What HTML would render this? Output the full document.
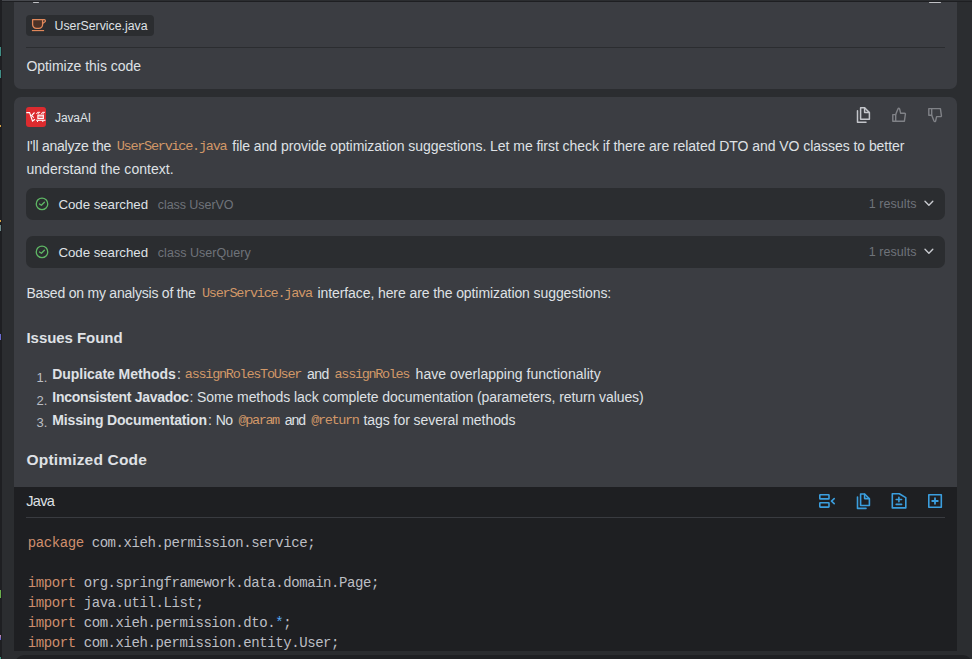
<!DOCTYPE html>
<html><head><meta charset="utf-8"><style>
html,body{margin:0;padding:0}
body{width:972px;height:659px;overflow:hidden;position:relative;background:#2b2d30;font-family:"Liberation Sans", sans-serif}
.b{position:absolute}
.t{position:absolute;white-space:nowrap}
.code{font-family:"Liberation Mono", monospace;font-size:14px;letter-spacing:-0.420px}
</style></head><body>
<div class="b" style="left:0;top:0;width:2px;height:659px;background:#1e1f22"></div>
<div class="b" style="left:2px;top:0;width:98px;height:1px;background:#46484d"></div>
<div class="b" style="left:0;top:1px;width:972px;height:1px;background:#1e1f22"></div>
<!-- card 1 -->
<div class="b" style="left:14px;top:2px;width:943px;height:87px;background:#3b3d42;border-radius:0 0 7px 7px"></div>
<div class="b" style="left:33px;top:2px;width:6px;height:1px;background:#c0c1c5;border-radius:1px"></div>
<div class="b" style="left:929px;top:2px;width:12px;height:1px;background:#c0c1c5;border-radius:1px"></div>
<div class="b" style="left:26px;top:15px;width:128px;height:21px;background:#2b2d30;border-radius:4px"></div>
<div class="b" style="left:26px;top:47px;width:919px;height:1px;background:#2b2d30"></div>
<!-- card 2 -->
<div class="b" style="left:14px;top:97px;width:943px;height:554px;background:#3b3d42;border-radius:7px 7px 0 0"></div>
<div class="b" style="left:26px;top:107px;width:20px;height:20px;background:#dc2b2f;border-radius:3px"></div>
<div class="b" style="left:26px;top:188px;width:919px;height:32px;background:#2b2d30;border-radius:7px"></div>
<div class="b" style="left:26px;top:236px;width:919px;height:32px;background:#2b2d30;border-radius:7px"></div>
<!-- code block -->
<div class="b" style="left:14px;top:487px;width:943px;height:164px;background:#1e1f22"></div>
<div class="b" style="left:26px;top:517px;width:919px;height:1px;background:#393b40"></div>
<!-- bottom element -->
<div class="b" style="left:15px;top:655px;width:957px;height:30px;background:#1f2023;border-radius:9px"></div>
<div class="b" style="left:0;top:47px;width:1px;height:9px;background:#3f8f86"></div>
<div class="b" style="left:0;top:70px;width:1px;height:8px;background:#3f8f86"></div>
<div class="b" style="left:0;top:125px;width:1px;height:2px;background:#d9a343"></div>
<div class="b" style="left:0;top:220px;width:1px;height:2px;background:#d9a343"></div>
<div class="b" style="left:0;top:225px;width:1px;height:6px;background:#6f8c8c"></div>
<div class="b" style="left:0;top:334px;width:1px;height:6px;background:#6a6ad0"></div>
<div class="b" style="left:0;top:590px;width:1px;height:8px;background:#6ab04c"></div>
<div class="b" style="left:0;top:635px;width:1px;height:5px;background:linear-gradient(#d08aa8,#4a5ad0)"></div>
<div class="b" style="left:0;top:657px;width:1px;height:2px;background:#3f9f86"></div>
<svg class="b" style="left:0;top:0" width="972" height="659" viewBox="0 0 972 659" fill="none" stroke-linecap="round" stroke-linejoin="round">
<!-- cup -->
<path d="M32.6 19.6H42.6V24.6A3.8 3.8 0 0 1 38.8 28.4H36.4A3.8 3.8 0 0 1 32.6 24.6Z" fill="#4b3126" stroke="#e0875a" stroke-width="1.3"/>
<path d="M42.6 19.6H44.2A1.4 1.4 0 0 1 45.3 21.6L42.6 23.4" stroke="#e0875a" stroke-width="1.2"/>
<rect x="31.9" y="30" width="12.2" height="1.15" fill="#e0875a"/>
<!-- logo -->
<g stroke="#fff" stroke-width="1.1" stroke-linecap="butt" stroke-linejoin="miter">
<path d="M26.3 112.6H29.6L32.5 121L35 119.2"/>
<path d="M34.5 112.5L31.6 115.5L33.8 117.6"/>
<path d="M36.4 113.8L37.6 112.3H40.2M37.7 112.9L38.7 114.2M41.3 113.8L42.5 112.3H44.9M42.6 112.9L43.6 114.2" stroke-width="1"/>
<path d="M38.2 120.5L37.2 122M42.8 120.5V122" stroke-width="1"/>
</g>
<rect x="37.3" y="114.6" width="6.6" height="4.4" fill="#fff"/>
<rect x="38.4" y="115.8" width="4.4" height="0.7" fill="#dc2b2f"/>
<rect x="38.4" y="117.2" width="4.4" height="0.7" fill="#dc2b2f"/>
<rect x="36.2" y="119.7" width="9.2" height="1.1" fill="#fff"/>
<!-- copy gray -->
<g stroke="#c3c5ca" stroke-width="1.5" id="cp">
<path d="M860.6 107.8H864.6L869.4 112.6V119.3H860.6Z"/>
<path d="M864.6 108V112.4H869.2"/>
<path d="M857.5 110.8V122.2H866"/>
</g>
<!-- thumbs up -->
<g stroke="#808287" stroke-width="1.4">
<path d="M892.8 114.6H895.7V121.2H892.8Z"/>
<path d="M895.7 114.6L898 108.8Q898.7 107.6 899.6 108.8L900.6 113.2H904.6Q905.5 113.2 905.4 114.2L904.4 121.2H895.7"/>
</g>
<g stroke="#808287" stroke-width="1.4" transform="translate(36 229.8) scale(1 -1)">
<path d="M892.8 114.6H895.7V121.2H892.8Z"/>
<path d="M895.7 114.6L898 108.8Q898.7 107.6 899.6 108.8L900.6 113.2H904.6Q905.5 113.2 905.4 114.2L904.4 121.2H895.7"/>
</g>
<!-- rows -->
<g stroke="#5fb865" stroke-width="1.3">
<circle cx="42" cy="203.9" r="5.75"/>
<path d="M39.5 204L41.4 205.3L44.4 202.3"/>
<circle cx="42" cy="251.9" r="5.75"/>
<path d="M39.5 252L41.4 253.3L44.4 250.3"/>
</g>
<g stroke="#c9cbd0" stroke-width="1.4">
<path d="M925 201.3L928.9 205.2L932.8 201.3"/>
<path d="M925 249.3L928.9 253.2L932.8 249.3"/>
</g>
<!-- code header icons -->
<g stroke="#3b9ede" stroke-width="1.6">
<rect x="819.8" y="494.8" width="9.2" height="4.1" rx="0.5"/>
<rect x="819.8" y="502.7" width="9.2" height="4.4" rx="0.5"/>
<path d="M834.2 498.6L831.5 501.1L834.2 503.6"/>
<g transform="translate(0 386.2)">
<path d="M860.6 107.8H864.6L869.4 112.6V119.3H860.6Z"/>
<path d="M864.6 108V112.4H869.2"/>
<path d="M857.5 110.8V122.2H866"/>
</g>
<path d="M892.3 493.8H899.3L905.8 497.6V507.9H892.3Z"/>
<path d="M896.2 499.5H901.6M898.9 497.3V501.7M896.2 504.4H901.6"/>
<rect x="928.8" y="494.7" width="12.5" height="12.5"/>
<path d="M932.2 501H937.8M935 498.2V503.8" stroke-width="1.8"/>
</g>
</svg>

<div class="t" style="left:54.60px;top:18.50px;font:400 12.30px/14px 'Liberation Sans', sans-serif;color:#dfe1e5;letter-spacing:-0.004px;">UserService.java</div>
<div class="t" style="left:26.40px;top:57.80px;font:400 14.00px/16px 'Liberation Sans', sans-serif;color:#dfe1e5;letter-spacing:-0.033px;">Optimize this code</div>
<div class="t" style="left:55.00px;top:111.00px;font:400 12.00px/14px 'Liberation Sans', sans-serif;color:#dfe1e5;letter-spacing:-0.117px;">JavaAI</div>
<div class="t" style="left:26.40px;top:138.00px;font:400 14.00px/16px 'Liberation Sans', sans-serif;color:#dfe1e5;letter-spacing:-0.225px;">I&#x27;ll analyze the</div>
<div class="t" style="left:116.70px;top:139.30px;font:400 13.50px/15px 'Liberation Mono', monospace;color:#d29868;letter-spacing:-1.248px;">UserService.java</div>
<div class="t" style="left:232.30px;top:138.00px;font:400 14.00px/16px 'Liberation Sans', sans-serif;color:#dfe1e5;letter-spacing:-0.049px;">file and provide optimization suggestions. Let me first check if there are related DTO and VO classes to better</div>
<div class="t" style="left:26.40px;top:161.00px;font:400 14.00px/16px 'Liberation Sans', sans-serif;color:#dfe1e5;letter-spacing:0.044px;">understand the context.</div>
<div class="t" style="left:58.40px;top:197.00px;font:400 13.30px/15px 'Liberation Sans', sans-serif;color:#dfe1e5;letter-spacing:-0.042px;">Code searched</div>
<div class="t" style="left:157.80px;top:198.00px;font:400 12.50px/14px 'Liberation Sans', sans-serif;color:#6f737a;letter-spacing:-0.064px;">class UserVO</div>
<div class="t" style="left:868.80px;top:196.70px;font:400 12.50px/14px 'Liberation Sans', sans-serif;color:#6f737a;letter-spacing:0.045px;">1 results</div>
<div class="t" style="left:58.40px;top:245.00px;font:400 13.30px/15px 'Liberation Sans', sans-serif;color:#dfe1e5;letter-spacing:-0.042px;">Code searched</div>
<div class="t" style="left:157.80px;top:246.00px;font:400 12.50px/14px 'Liberation Sans', sans-serif;color:#6f737a;letter-spacing:0.037px;">class UserQuery</div>
<div class="t" style="left:868.80px;top:244.70px;font:400 12.50px/14px 'Liberation Sans', sans-serif;color:#6f737a;letter-spacing:0.045px;">1 results</div>
<div class="t" style="left:26.40px;top:284.80px;font:400 14.00px/16px 'Liberation Sans', sans-serif;color:#dfe1e5;letter-spacing:-0.219px;">Based on my analysis of the</div>
<div class="t" style="left:202.00px;top:286.10px;font:400 13.50px/15px 'Liberation Mono', monospace;color:#d29868;letter-spacing:-1.242px;">UserService.java</div>
<div class="t" style="left:317.50px;top:284.80px;font:400 14.00px/16px 'Liberation Sans', sans-serif;color:#dfe1e5;letter-spacing:-0.091px;">interface, here are the optimization suggestions:</div>
<div class="t" style="left:26.50px;top:328.70px;font:700 15.00px/17px 'Liberation Sans', sans-serif;color:#dfe1e5;letter-spacing:-0.053px;">Issues Found</div>
<div class="t" style="left:36.60px;top:369.80px;font:400 13.00px/15px 'Liberation Sans', sans-serif;color:#bcbec4;letter-spacing:0.000px;">1.</div>
<div class="t" style="left:52.30px;top:365.50px;font:700 14.00px/16px 'Liberation Sans', sans-serif;color:#dfe1e5;letter-spacing:-0.060px;">Duplicate Methods</div>
<div class="t" style="left:177.00px;top:365.50px;font:400 14.00px/16px 'Liberation Sans', sans-serif;color:#dfe1e5;letter-spacing:0.000px;">:</div>
<div class="t" style="left:184.80px;top:366.80px;font:400 13.50px/15px 'Liberation Mono', monospace;color:#d29868;letter-spacing:-1.258px;">assignRolesToUser</div>
<div class="t" style="left:307.00px;top:365.50px;font:400 14.00px/16px 'Liberation Sans', sans-serif;color:#dfe1e5;letter-spacing:-0.529px;">and</div>
<div class="t" style="left:334.60px;top:366.80px;font:400 13.50px/15px 'Liberation Mono', monospace;color:#d29868;letter-spacing:-1.332px;">assignRoles</div>
<div class="t" style="left:415.60px;top:365.50px;font:400 14.00px/16px 'Liberation Sans', sans-serif;color:#dfe1e5;letter-spacing:0.022px;">have overlapping functionality</div>
<div class="t" style="left:36.60px;top:392.50px;font:400 13.00px/15px 'Liberation Sans', sans-serif;color:#bcbec4;letter-spacing:0.000px;">2.</div>
<div class="t" style="left:52.30px;top:388.50px;font:700 14.00px/16px 'Liberation Sans', sans-serif;color:#dfe1e5;letter-spacing:-0.299px;">Inconsistent Javadoc</div>
<div class="t" style="left:189.60px;top:388.50px;font:400 14.00px/16px 'Liberation Sans', sans-serif;color:#dfe1e5;letter-spacing:0.000px;">:</div>
<div class="t" style="left:197.00px;top:388.50px;font:400 14.00px/16px 'Liberation Sans', sans-serif;color:#dfe1e5;letter-spacing:-0.081px;">Some methods lack complete documentation (parameters, return values)</div>
<div class="t" style="left:36.60px;top:415.20px;font:400 13.00px/15px 'Liberation Sans', sans-serif;color:#bcbec4;letter-spacing:0.000px;">3.</div>
<div class="t" style="left:52.30px;top:411.50px;font:700 14.00px/16px 'Liberation Sans', sans-serif;color:#dfe1e5;letter-spacing:-0.160px;">Missing Documentation</div>
<div class="t" style="left:208.00px;top:411.50px;font:400 14.00px/16px 'Liberation Sans', sans-serif;color:#dfe1e5;letter-spacing:0.000px;">:</div>
<div class="t" style="left:215.70px;top:411.50px;font:400 14.00px/16px 'Liberation Sans', sans-serif;color:#dfe1e5;letter-spacing:-0.596px;">No</div>
<div class="t" style="left:238.50px;top:412.80px;font:400 13.50px/15px 'Liberation Mono', monospace;color:#d29868;letter-spacing:-1.382px;">@param</div>
<div class="t" style="left:284.80px;top:411.50px;font:400 14.00px/16px 'Liberation Sans', sans-serif;color:#dfe1e5;letter-spacing:-1.029px;">and</div>
<div class="t" style="left:311.30px;top:412.80px;font:400 13.50px/15px 'Liberation Mono', monospace;color:#d29868;letter-spacing:-1.368px;">@return</div>
<div class="t" style="left:363.50px;top:411.50px;font:400 14.00px/16px 'Liberation Sans', sans-serif;color:#dfe1e5;letter-spacing:-0.052px;">tags for several methods</div>
<div class="t" style="left:26.50px;top:451.00px;font:700 15.50px/17px 'Liberation Sans', sans-serif;color:#dfe1e5;letter-spacing:0.179px;">Optimized Code</div>
<div class="t" style="left:26.20px;top:493.00px;font:400 14.50px/16px 'Liberation Sans', sans-serif;color:#dfe1e5;letter-spacing:-0.676px;">Java</div>
<div class="t code" style="left:27.8px;top:535.00px;line-height:16px"><span style="color:#cf8e6d">package </span><span style="color:#bcbec4">com.xieh.permission.service;</span></div>
<div class="t code" style="left:27.8px;top:575.00px;line-height:16px"><span style="color:#cf8e6d">import </span><span style="color:#bcbec4">org.springframework.data.domain.Page;</span></div>
<div class="t code" style="left:27.8px;top:595.00px;line-height:16px"><span style="color:#cf8e6d">import </span><span style="color:#bcbec4">java.util.List;</span></div>
<div class="t code" style="left:27.8px;top:615.00px;line-height:16px"><span style="color:#cf8e6d">import </span><span style="color:#bcbec4">com.xieh.permission.dto.</span><span style="color:#56a8f5">*</span><span style="color:#bcbec4">;</span></div>
<div class="t code" style="left:27.8px;top:635.00px;line-height:16px"><span style="color:#cf8e6d">import </span><span style="color:#bcbec4">com.xieh.permission.entity.User;</span></div>
</body></html>
